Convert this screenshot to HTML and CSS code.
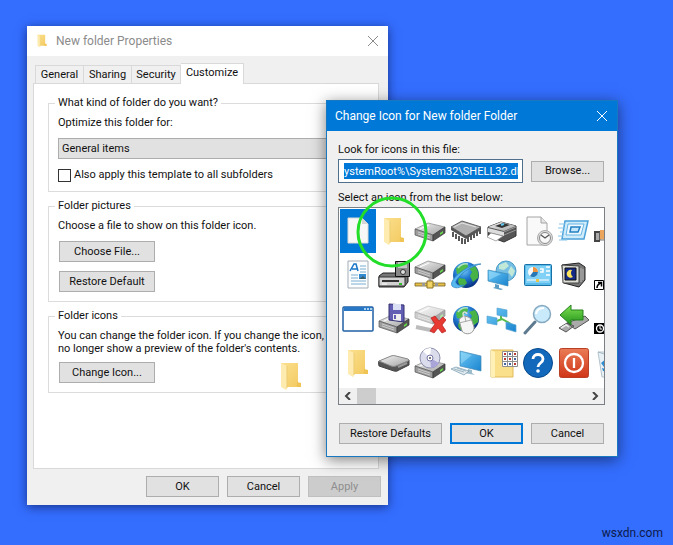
FILE: index.html
```html
<!DOCTYPE html>
<html lang="en">
<head>
<meta charset="utf-8">
<meta name="viewport" content="width=device-width, initial-scale=1">
<title>New folder Properties</title>
<link rel="stylesheet" href="styles.css">
</head>
<body>
<svg class="defs" aria-hidden="true">
  <defs>
    <linearGradient id="steel" x1="0" y1="0" x2="1" y2="1"><stop offset="0" stop-color="#f4f4f4"/><stop offset="1" stop-color="#a2a2a2"/></linearGradient>
    <linearGradient id="gold" x1="0" y1="0" x2="1" y2="1"><stop offset="0" stop-color="#fbe08e"/><stop offset="1" stop-color="#f3c95f"/></linearGradient>
    <linearGradient id="sky" x1="0" y1="0" x2="1" y2="1"><stop offset="0" stop-color="#6cc8f5"/><stop offset="1" stop-color="#1a84cf"/></linearGradient>
    <linearGradient id="leaf" x1="0" y1="0" x2="0" y2="1"><stop offset="0" stop-color="#7fe04f"/><stop offset="1" stop-color="#20921c"/></linearGradient>
    <linearGradient id="ember" x1="0" y1="0" x2="0" y2="1"><stop offset="0" stop-color="#ea7c56"/><stop offset="1" stop-color="#cf3517"/></linearGradient>
    <radialGradient id="ocean" cx="0.4" cy="0.3" r="0.7"><stop offset="0" stop-color="#7fd2fa"/><stop offset="0.5" stop-color="#1f78cf"/><stop offset="1" stop-color="#0a3484"/></radialGradient>
    <symbol id="folder" viewBox="0 0 32 32">
      <path d="M6 3h17v20l3 1v3H11z" fill="url(#gold)"/>
      <path d="M22 22l4 1v4h-4z" fill="#f0c355"/>
      <path d="M6 3l6 3v23l-1 1-5-3z" fill="#fdebb0"/>
      <path d="M12 6v22" stroke="#edcb72" stroke-width="1"/>
    </symbol>
    <symbol id="drive" viewBox="0 0 32 32">
      <path d="M1 14l13-6 17 4-12 8z" fill="url(#steel)" stroke="#858585" stroke-width=".7"/>
      <path d="M1 14l18 6v6L1 20z" fill="#9d9d9d" stroke="#555" stroke-width=".7"/>
      <path d="M19 20l12-8v6l-12 8z" fill="#555" stroke="#333" stroke-width=".7"/>
      <path d="M4 17l12 4M4 19l12 4" stroke="#d6d6d6" stroke-width=".8"/>
      <path d="M6 14l9-4" stroke="#fff"/>
      <path d="M26 18l3-2v2l-3 2z" fill="#65d948"/>
    </symbol>
    <symbol id="globe" viewBox="0 0 32 32">
      <circle cx="16" cy="16" r="13" fill="url(#ocean)"/>
      <path d="M6 10c3-5 8-6 11-6l1 4-4 3-2 5-5-1zM19 9l6-2c3 4 4 8 3 12l-5 4-3-6 2-4zM9 19l6 1 2 4-4 4c-4-1-6-5-4-9z" fill="#4dbb3a" opacity=".9"/>
      <path d="M8 9q4-5 10-4" fill="none" stroke="#d8f5ff" stroke-width="1.5" opacity=".7"/>
    </symbol>
    <symbol id="screen" viewBox="0 0 32 32">
      <path d="M2 10l20 4v12L2 21z" fill="url(#sky)" stroke="#3989b8" stroke-width=".7"/>
      <path d="M3 11l12 3-12 6z" fill="#9cddfb" opacity=".6"/>
      <path d="M9 24l4 1v3l4 1-2 1-8-2 2-1z" fill="#5a9cc4"/>
    </symbol>
  </defs>
</svg>

<main class="desktop">
  <section class="window props" aria-label="New folder Properties">
    <header class="props-title">
      <svg class="small-icon" viewBox="5 2 22 29" aria-hidden="true"><use href="#folder" width="32" height="32"/></svg>
      <h1>New folder Properties</h1>
      <button class="close" type="button" aria-label="Close"><svg viewBox="0 0 12 12"><path d="M1 1l10 10M11 1L1 11"/></svg></button>
    </header>
    <div class="props-body">
      <nav class="tabs">
        <button type="button">General</button><button type="button">Sharing</button><button type="button">Security</button><button type="button" class="active">Customize</button>
      </nav>
      <div class="panel">
        <fieldset>
          <legend>What kind of folder do you want?</legend>
          <label class="line" for="kind">Optimize this folder for:</label>
          <select id="kind"><option>General items</option></select>
          <div class="check"><input type="checkbox" id="sub"><label for="sub">Also apply this template to all subfolders</label></div>
        </fieldset>
        <fieldset>
          <legend>Folder pictures</legend>
          <p class="line">Choose a file to show on this folder icon.</p>
          <div class="stack">
            <button type="button" class="btn wide">Choose File...</button>
            <button type="button" class="btn wide">Restore Default</button>
          </div>
        </fieldset>
        <fieldset>
          <legend>Folder icons</legend>
          <p class="note">You can change the folder icon. If you change the icon, it will<br>no longer show a preview of the folder's contents.</p>
          <div class="change">
            <button type="button" class="btn wide">Change Icon...</button>
            <svg class="preview" viewBox="0 0 32 32" aria-hidden="true"><use href="#folder"/></svg>
          </div>
        </fieldset>
      </div>
      <footer class="actions">
        <button type="button" class="btn">OK</button>
        <button type="button" class="btn">Cancel</button>
        <button type="button" class="btn" disabled>Apply</button>
      </footer>
    </div>
  </section>

  <section class="window dialog" aria-label="Change Icon for New folder Folder">
    <header class="dialog-title">
      <h2>Change Icon for New folder Folder</h2>
      <button class="close" type="button" aria-label="Close"><svg viewBox="0 0 12 12"><path d="M1 1l10 10M11 1L1 11"/></svg></button>
    </header>
    <div class="dialog-body">
      <label for="file">Look for icons in this file:</label>
      <div class="file-row">
        <div class="field"><input id="file" type="text" value="ystemRoot%\System32\SHELL32.dll"></div>
        <button type="button" class="btn">Browse...</button>
      </div>
      <p class="list-label">Select an icon from the list below:</p>
      <div class="list">
        <div class="icons">
          <button type="button" class="selected" aria-label="Document"><svg viewBox="0 0 32 32"><path d="M6 3h14l6 6v19H6z" fill="#f7f7f7" stroke="#d8d8d8"/><path d="M20 3v6h6z" fill="#d5d5d5"/></svg></button>
          <button type="button" aria-label="Folder"><svg><use href="#folder"/></svg></button>
          <button type="button" aria-label="Drive"><svg><use href="#drive"/></svg></button>
          <button type="button" aria-label="Chip"><svg viewBox="0 0 32 32"><path d="M3 17v5m3-3v5m3-3v5m3-3v6m3-5v5m3-7v5m3-7v5m3-7v5m3-7v5m3-7v5" stroke="#222" stroke-width="1.500"/><path d="M1 12l11-6 19 6-15 9z" fill="#b0b0b0" stroke="#444" stroke-width=".8"/><path d="M1 12l15 9v3L1 15zM16 21l15-9v3l-15 9z" fill="#555"/><path d="M4 12l8-4 14 4" fill="none" stroke="#e4e4e4"/></svg></button>
          <button type="button" aria-label="Printer"><svg viewBox="0 0 32 32"><path d="M2 12l13-5 15 4v10l-12 6L2 21z" fill="#555" stroke="#333"/><path d="M2 12l13-5 15 4-12 5z" fill="url(#steel)"/><path d="M9 11l8-3 7 2-8 3z" fill="#343434"/><path d="M15 10l3-1" stroke="#60c6ef" stroke-width="2"/><path d="M2 13l16 4v4L2 17z" fill="#ddd"/><path d="M18 17l12-5M18 20l12-5" stroke="#999"/><path d="M5 18l12 3-7 5-9-4z" fill="#fff" stroke="#888" stroke-width=".7"/></svg></button>
          <button type="button" aria-label="Recent"><svg viewBox="0 0 32 32"><path d="M5 2h14l6 6v22H5z" fill="#f9f9f9" stroke="#a4a4a4"/><path d="M19 2v6h6" fill="#e5e5e5" stroke="#a4a4a4"/><circle cx="23" cy="23" r="7.500" fill="#ddd" stroke="#aaa"/><circle cx="23" cy="23" r="5.500" fill="#f8f8f8" stroke="#888"/><path d="M19 20l4 3 4-3" fill="none" stroke="#555" stroke-width="1.300"/></svg></button>
          <button type="button" aria-label="Run"><svg viewBox="0 0 32 32"><path d="M7 6h23l-4 18H4z" fill="#d0ecfb" stroke="#4aa0d9" stroke-width="1.500"/><path d="M10 9h16l-3 11H8z" fill="#eff9ff" stroke="#69b5e3"/><path d="M13 12h9l-2 5h-8z" fill="#c7e8fa" stroke="#2380c2" stroke-width="1.500"/><path d="M1 9h6M0 13h6M2 17h4M0 21h5M1 25h8" stroke="#85c6ed"/></svg></button>
          <button type="button" aria-label="Program"><svg viewBox="0 0 32 32"><path d="M0 16h6v11H0z" fill="#444"/><path d="M2 18h3v7H2z" fill="#aaa"/><path d="M6 17h26v8H6z" fill="#f3dfc4" stroke="#777"/><path d="M6 15h5v9H6z" fill="#eba55c"/></svg></button>

          <button type="button" aria-label="Text document"><svg viewBox="0 0 32 32"><path d="M6 2h20v27H6z" fill="#fbfdff" stroke="#a4adb5"/><path d="M8 12l4-7h2l2 7M10 10h5" fill="none" stroke="#1875c9" stroke-width="1.500"/><path d="M18 7h6M18 10h6M18 13h6M9 16h7M9 19h7M9 22h15M9 25h15" stroke="#7aacd2"/><path d="M17 15h7v5h-7z" fill="#328bd1"/><path d="M17 20l4-3 3 3z" fill="#385d6b"/></svg></button>
          <button type="button" aria-label="Floppy drive"><svg viewBox="0 0 32 32"><path d="M1 17l4-3h25v9l-4 5H1z" fill="#777" stroke="#222"/><path d="M1 18h26v9H1z" fill="#d2d2d2" stroke="#333"/><path d="M4 22h17" stroke="#333" stroke-width="2"/><path d="M4 25h5" stroke="#fff"/><path d="M21 25h3" stroke="#36bf31" stroke-width="2"/><path d="M17.500 2.500h14v15h-14z" fill="#888" stroke="#111"/><path d="M20 3h9v6h-9z" fill="#c5c5c5"/><circle cx="25" cy="13" r="2.500" fill="#ddd" stroke="#333"/></svg></button>
          <button type="button" aria-label="Network drive"><svg viewBox="0 0 32 32"><use href="#drive" y="-6" width="32" height="32"/><path d="M16 19v6" stroke="#aaa" stroke-width="3"/><path d="M1 24h30v3H1z" fill="#e5c14a" stroke="#766125" stroke-width=".8"/><path d="M13 22h6v7h-6z" fill="#f1d463" stroke="#8a7229"/><path d="M8 24h3v3H8zm13 0h3v3h-3z" fill="#999"/></svg></button>
          <button type="button" aria-label="Internet"><svg viewBox="0 0 32 32"><use href="#globe" width="32" height="32"/><path d="M2 27C-2 20 20 4 31 5c-7 1-20 8-25 17-1 4 4 5 8 4-4 3-9 4-12 1z" fill="#57b8f0" stroke="#287fc1" stroke-width=".7"/></svg></button>
          <button type="button" aria-label="Network computer"><svg viewBox="0 0 32 32"><circle cx="20" cy="12" r="10" fill="#74bde3" stroke="#499bc8"/><path d="M13 6l7-3 3 4-5 4-5-1zM25 7l4 5-3 6-4-5z" fill="#c2e8d8"/><use href="#screen" y="1" width="32" height="32"/></svg></button>
          <button type="button" aria-label="Control panel"><svg viewBox="0 0 32 32"><rect x="2.500" y="5.500" width="27" height="21" rx="1" fill="#58bbea" stroke="#1770a6"/><path d="M4 7h24v17H4z" fill="#81d0f5"/><circle cx="11" cy="13" r="5" fill="#f5fbff"/><path d="M11 13V8a5 5 0 0 1 5 5z" fill="#ee9340"/><path d="M11 13h5a5 5 0 0 1-8 4z" fill="#2677b5"/><path d="M18 10h3v3h-3m6-5h4M24 12h4M24 16h4" fill="none" stroke="#fff" stroke-width="1.500"/><path d="M5 21h22" stroke="#fff"/><path d="M14 20h3v3h-3z" fill="#e8c64c"/></svg></button>
          <button type="button" aria-label="Sleep"><svg viewBox="0 0 32 32"><path d="M4 6l17-2 6 4v13l-6 7-15-4z" fill="#777" stroke="#222"/><path d="M4 6l17 1v17H5z" fill="#dcdcd6" stroke="#444"/><path d="M7 9h11v12H7z" fill="#142a86" stroke="#111"/><path d="M14 11a4 4 0 1 0 1 7 5 5 0 0 1-1-7z" fill="#ffe45a"/><path d="M23 9v14M25 10v11" stroke="#bbb"/></svg></button>
          <button type="button" aria-label="Shortcut"><svg viewBox="0 0 32 32"><path d="M.5 21.500h9v9H.5z" fill="#fff" stroke="#000"/><path d="M3 29c0-3 1-4 4-5M4 23.500h3.500v4" fill="none" stroke="#000" stroke-width="1.500"/></svg></button>

          <button type="button" aria-label="Window"><svg viewBox="0 0 32 32"><rect x="1" y="4" width="30" height="24" rx="1" fill="#fff" stroke="#2060a4" stroke-width="1.500"/><path d="M2 4h28v4H2z" fill="#2777c4"/><path d="M22 6h2m1 0h2m1 0h2" stroke="#d8efff" stroke-width="1.500"/></svg></button>
          <button type="button" aria-label="Save to drive"><svg viewBox="0 0 32 32"><use href="#drive" y="4" width="32" height="32"/><path d="M11 1l15 1v17l-15-2z" fill="#625eb3" stroke="#343071"/><path d="M15 1h8v6h-8z" fill="#dce0f5"/><path d="M15 11h8v7l-8-1z" fill="#eee"/><path d="M17 12v4" stroke="#625eb3" stroke-width="2"/></svg></button>
          <button type="button" aria-label="Disconnected drive"><svg viewBox="0 0 32 32"><use href="#drive" y="-5" width="32" height="32" opacity=".5"/><path d="M2 24l14 3 4-1" fill="none" stroke="#bcbcbc" stroke-width="4"/><path d="M17 15l4-2 4 5 4-4 3 3-4 5 4 6-4 2-4-5-4 5-4-2 5-7z" fill="#e63a32" stroke="#b61c1c" stroke-width=".7"/></svg></button>
          <button type="button" aria-label="Internet mouse"><svg viewBox="0 0 32 32"><use href="#globe" width="32" height="32"/><path d="M9 17c3-6 11-4 13 1l2 6c1 7-9 9-12 4z" fill="#f5f5f5" stroke="#999"/><path d="M9 20l12-3M15 14l1 5" stroke="#aaa"/><path d="M14 14C11 8 16 8 17 11" fill="none" stroke="#ddd" stroke-width="1.500"/></svg></button>
          <button type="button" aria-label="Network"><svg viewBox="0 0 32 32"><path d="M8 19l8-3 9 5M15 16V8" fill="none" stroke="#54bd4a" stroke-width="2"/><path d="M11 5l10 2v7l-10-2zM1 13l10 2v7L1 20zM20 19l10 3v7l-10-3z" fill="url(#sky)" stroke="#5aa4d1" stroke-width=".7"/></svg></button>
          <button type="button" aria-label="Search"><svg viewBox="0 0 32 32"><path d="M3 30l10-11" stroke="#5d7a8f" stroke-width="3" stroke-linecap="round"/><circle cx="20" cy="11" r="8.500" fill="#c9eafb" stroke="#86a9c0" stroke-width="1.500"/><path d="M14 11q1-6 8-6" fill="none" stroke="#fff" stroke-width="2"/></svg></button>
          <button type="button" aria-label="Safely remove"><svg viewBox="0 0 32 32"><path d="M1 25l8-5 7 3-8 6zM9 20l18-7 4 4-14 9z" fill="#aaa" stroke="#555"/><path d="M3 25l5-3 3 2" fill="none" stroke="#eee" stroke-width="1.500"/><path d="M2 12L13 2v5h12v10H13v5z" fill="url(#leaf)" stroke="#24811e"/></svg></button>
          <button type="button" aria-label="Scheduled"><svg viewBox="0 0 32 32"><path d="M0 20h12v11H0z" fill="#000"/><circle cx="6" cy="25.500" r="3.500" fill="none" stroke="#fff" stroke-width="1.300"/><path d="M6 23v3h2" fill="none" stroke="#fff"/></svg></button>

          <button type="button" aria-label="Folder"><svg><use href="#folder"/></svg></button>
          <button type="button" aria-label="Removable drive"><svg viewBox="0 0 32 32"><path d="M1 14q-1 1 0 5l15 5q3 1 5-1l10-5v-5z" fill="#555" stroke="#444"/><path d="M1 14l12-5q2-1 5 0l12 3q2 1 0 2l-12 5q-2 1-5 0z" fill="url(#steel)" stroke="#888"/><path d="M20 20l9-4" stroke="#999" stroke-width="2"/></svg></button>
          <button type="button" aria-label="Disc drive"><svg viewBox="0 0 32 32"><use href="#drive" y="5" width="32" height="32"/><circle cx="16" cy="11" r="10" fill="#dbddec" stroke="#8d90ad"/><path d="M16 11L9 4a10 10 0 0 1 8-3z" fill="#fff"/><path d="M16 11l9 5a10 10 0 0 1-8 5z" fill="#a9a5d8"/><circle cx="16" cy="11" r="3" fill="#fff" stroke="#7778a5"/><circle cx="16" cy="11" r="1" fill="#555"/></svg></button>
          <button type="button" aria-label="Computer"><svg viewBox="0 0 32 32"><path d="M10 4l21 5v15l-21-5z" fill="url(#sky)" stroke="#438ab8" stroke-width=".7"/><path d="M11 5l11 3-11 9z" fill="#a3dffa" opacity=".5"/><path d="M18 22l4 1v3l3 2-11-2 4-2z" fill="#9dbdcd"/><path d="M1 22l5-2 13 4-5 4z" fill="#dfe9ef" stroke="#7297ab" stroke-width=".7"/><path d="M4 22l10 3M7 21l9 3" stroke="#9fb8c5"/></svg></button>
          <button type="button" aria-label="Programs folder"><svg viewBox="0 0 32 32"><path d="M5 3h22v27H5z" fill="#fbe08b" stroke="#e1bb59"/><path d="M5 3l4 2v25H5z" fill="#fff0b8"/><path d="M16.500 4.500h15v15h-15zM16.500 9.500h15M16.500 14.500h15M21.500 4.500v15M26.500 4.500v15" fill="#fff" stroke="#8f8f8f"/><path d="M18 7h2m8 0h2M18 12h2m3 0h2M28 17h2" stroke="#b73b34" stroke-width="2"/><path d="M23 7h2m3 5h2M18 17h2m3 0h2" stroke="#45669c" stroke-width="2"/></svg></button>
          <button type="button" aria-label="Help"><svg viewBox="0 0 32 32"><circle cx="16" cy="16" r="14.500" fill="#1268ba" stroke="#07488c"/><path d="M11 12c0-6 10-6 10 0 0 4-5 4-5 8" fill="none" stroke="#fff" stroke-width="2.800"/><circle cx="16" cy="24" r="1.800" fill="#fff"/></svg></button>
          <button type="button" aria-label="Shut down"><svg viewBox="0 0 32 32"><rect x="1.500" y="1.500" width="29" height="29" rx="2" fill="url(#ember)" stroke="#b94024"/><circle cx="16" cy="16" r="9" fill="none" stroke="#fff" stroke-width="2.300"/><path d="M16 11v10" stroke="#fff" stroke-width="2.300"/></svg></button>
          <button type="button" aria-label="Recycle bin"><svg viewBox="0 0 32 32"><path d="M4 5h24l-4 25H8z" fill="#e8f1f6" stroke="#b5c4cc"/><path d="M4 5q12 5 24 0" fill="none" stroke="#a6b7c1"/><path d="M7 16l5-4 3 5-3-1-2 4zM8 21l5 1v3l-4-1z" fill="#2e8dd3"/></svg></button>
        </div>
        <div class="scrollbar">
          <button type="button" aria-label="Scroll left"><svg viewBox="0 0 8 8"><path d="M6 0L2 4l4 4"/></svg></button>
          <span class="thumb"></span>
          <button type="button" aria-label="Scroll right"><svg viewBox="0 0 8 8"><path d="M2 0l4 4-4 4"/></svg></button>
        </div>
      </div>
      <footer class="dialog-actions">
        <button type="button" class="btn grow">Restore Defaults</button>
        <button type="button" class="btn primary">OK</button>
        <button type="button" class="btn">Cancel</button>
      </footer>
    </div>
    <svg class="ring" viewBox="0 0 76 76" aria-hidden="true"><circle cx="38" cy="38" r="34"/></svg>
  </section>
  <p class="credit">wsxdn.com</p>
</main>
</body>
</html>
```
FILE: styles.css
```css
* { box-sizing: border-box; }
body { margin: 0; background: #346eff; color: #111; font: 11px/14px "Roboto", sans-serif; }
h1, h2, p { margin: 0; font-size: 11px; font-weight: 400; }
button, input, select { font: inherit; color: inherit; margin: 0; padding: 0; }
.defs { position: absolute; width: 0; height: 0; }
.desktop { position: relative; min-height: 100vh; overflow: hidden; }

.window { position: absolute; }
.props { left: 27px; top: 26px; width: 361px; background: #f0f0f0; box-shadow: 0 2px 10px rgba(0, 0, 40, .55); }
.props-title { display: flex; align-items: center; gap: 9px; height: 30px; padding: 0 9px 0 10px; background: #fff; color: #8b8b8b; }
.props-title h1, .dialog-title h2 { flex: 1; font-size: 12px; }
.small-icon { width: 10px; height: 14px; }
.close { display: flex; width: 12px; height: 12px; border: 0; background: none; }
.close svg { width: 12px; height: 12px; fill: none; stroke: currentColor; }

.props-body { padding: 7px 7px 8px 6px; }
.tabs { display: flex; align-items: flex-end; padding-left: 2px; }
.tabs button { flex: 0 0 48px; height: 18px; border: 1px solid #d9d9d9; border-width: 1px 1px 0 0; background: #f0f0f0; white-space: nowrap; }
.tabs button:first-child { flex-basis: 49px; border-left-width: 1px; }
.tabs button:nth-child(3) { flex-basis: 49px; }
.tabs .active { flex-basis: 63px; height: 21px; margin-bottom: -1px; padding-bottom: 2px; background: #fff; }
.panel { min-height: 386px; margin-right: 2px; padding: 12px 12px 0 14px; border: 1px solid #d9d9d9; background: #fff; }

fieldset { min-width: 0; margin: 0 0 7px; padding: 6px 8px 9px 9px; border: 1px solid #dcdcdc; white-space: nowrap; }
legend { margin-left: -3px; padding: 0 3px; }
.line { display: block; margin-bottom: 8px; }
select { display: block; width: 100%; height: 21px; padding: 0 3px; border: 1px solid #adadad; border-radius: 0; background: #e1e1e1; appearance: none; }
.check { display: flex; align-items: center; gap: 3px; margin-top: 9px; }
.check input { appearance: none; width: 13px; height: 13px; border: 1px solid #333; background: #fff; }
.stack { display: grid; justify-items: start; gap: 9px; margin-left: 1px; }
.btn { width: 73px; height: 21px; border: 1px solid #adadad; background: #e1e1e1; white-space: nowrap; }
.btn.wide { width: 96px; }
.btn:disabled { border-color: #bfbfbf; background: #ccc; color: #8e8e8e; }
.note { line-height: 13px; }
.change { display: flex; gap: 120px; height: 28px; padding: 7px 0 0 1px; }
.preview { width: 32px; height: 32px; margin-top: -2px; }
.actions { display: flex; justify-content: flex-end; gap: 8px; padding-top: 7px; }

.dialog { left: 326px; top: 100px; width: 292px; border: 1px solid #1878c0; background: #f0f0f0; box-shadow: 0 3px 14px rgba(0, 0, 0, .5); }
.dialog-title { display: flex; align-items: center; height: 30px; padding: 0 9px 0 8px; background: #0078d7; color: #fff; }
.dialog-body { padding: 12px 12px 12px 11px; }
.dialog-body > label { display: block; }
.file-row { display: flex; align-items: center; gap: 8px; margin: 2px 1px 8px 0; }
.field { flex: 1; min-width: 0; height: 24px; padding: 3px 4px 3px 5px; border: 1px solid #4f6f8c; background: #fff; }
.field input { display: block; width: 100%; height: 16px; border: 0; background: #0078d7; color: #fff; }
.list { margin-top: 2px; border: 1px solid #7a7f86; background: #fff; overflow: hidden; }
.icons { display: grid; grid-template-columns: repeat(8, 36px); grid-auto-rows: 44px; padding: 1px 1px 3px; overflow: hidden; }
.icons button { display: grid; place-items: center; border: 0; background: none; }
.icons svg { width: 32px; height: 32px; }
.icons .selected { background: #0078d7; }
.scrollbar { display: flex; align-items: center; height: 16px; background: #f0f0f0; }
.scrollbar button { display: grid; place-items: center; width: 18px; height: 16px; border: 0; background: none; }
.scrollbar svg { width: 8px; height: 8px; fill: none; stroke: #444; stroke-width: 2; }
.thumb { width: 19px; height: 16px; margin-right: auto; background: #cdcdcd; }
.dialog-actions { display: flex; gap: 8px; padding: 18px 1px 0; }
.dialog-actions .grow { flex: 1; }
.primary { border: 2px solid #0078d7; }
.ring { position: absolute; left: 27px; top: 93px; width: 76px; height: 76px; fill: none; stroke: #22de28; stroke-width: 3; pointer-events: none; }
.credit { position: absolute; right: 10px; bottom: 5px; font-size: 12px; color: #0c1a4a; }
```
